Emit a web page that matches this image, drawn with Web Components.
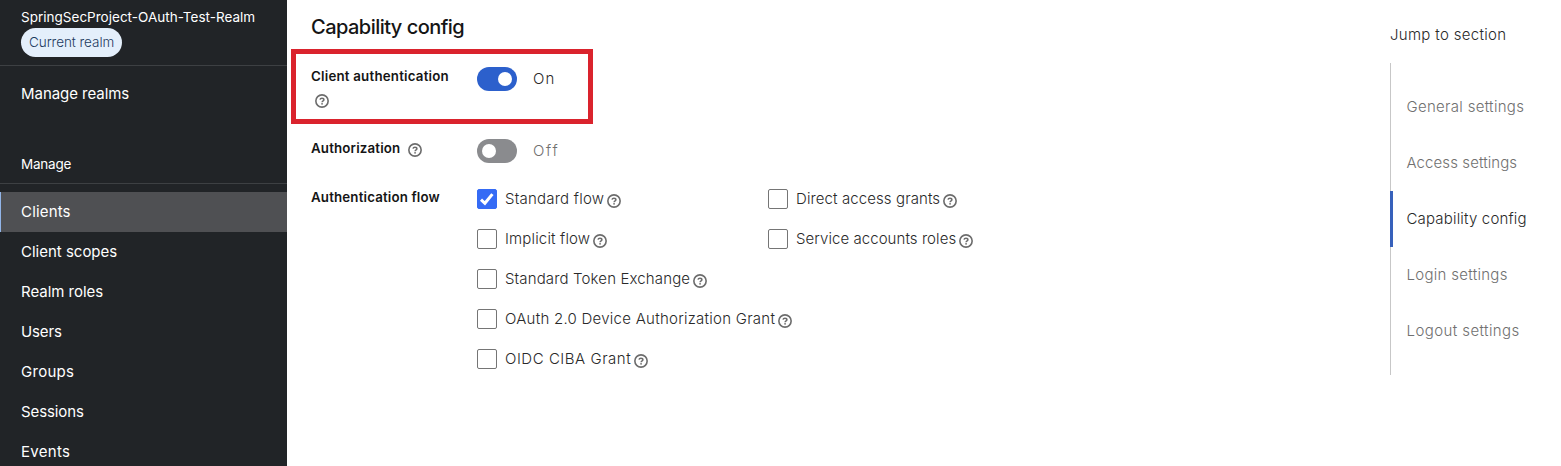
<!DOCTYPE html>
<html lang="en">
<head>
<meta charset="utf-8">
<title>Capability config</title>
<style>
body{margin:0;font-family:Inter,"Open Sans",sans-serif;font-size:15px;line-height:24px;color:#292929;background:#fff}
</style>
</head>
<body>
<app-shell></app-shell>
<script>
const define=(name,html,init)=>customElements.define(name,class extends HTMLElement{
  constructor(){super();this.attachShadow({mode:'open'}).innerHTML=html}
  connectedCallback(){if(init)init.call(this,this.shadowRoot)}
});

// Text whose tracking is set so that its line has the given width.
define('fit-text',`<style>:host{display:inline-block;white-space:nowrap;flex:none}span{display:inline-block;margin-left:1px}:host([flush]) span{margin-left:0}</style><span><slot></slot></span>`,function(r){
  const target=+this.getAttribute('w'),s=r.querySelector('span'),n=this.textContent.length;
  const line=target-(this.hasAttribute('flush')?.6:1.8);
  s.style.letterSpacing=((line-s.getBoundingClientRect().width)/n)+'px';
  this.style.width=target+'px';
});

define('help-icon',`<style>:host{display:block;width:14px;height:14px;flex:none;color:#6c6c6c}svg{display:block}</style>
<svg width="14" height="14" viewBox="0 0 14 14" fill="none" stroke="currentColor"><circle cx="7" cy="7" r="6.150" stroke-width="1.6"/><path d="M5 5.600C5.200 4.600 5.900 4.200 6.900 4.200c1.200 0 2 .6 2 1.500C8.900 6.900 7.100 6.700 7.100 8.200" stroke-width="1.5"/><circle cx="7.050" cy="9.800" r=".9" fill="currentColor" stroke="none"/></svg>`);

define('nav-item',`<style>:host{display:flex;align-items:center;height:40px;padding-left:20px;box-sizing:border-box;color:#fff}
:host([current]){background:#4f5053;border-left:1px solid #92b5e8;padding-left:19px}</style><slot></slot>`);

define('side-bar',`<style>:host{display:block;width:287px;height:466px;flex:none;overflow:hidden;background:#212427;color:#fff}
.realm{height:66px;box-sizing:border-box;border-bottom:1px solid #3d4043;padding:7px 0 0 20px;font-size:13.500px;line-height:21px}
.realm fit-text{display:block}
.badge{display:flex;align-items:center;width:101px;height:29px;border-radius:15px;box-sizing:border-box;padding-left:7px;margin-left:1px;background:#e4effb;color:#1d3a5f;font-weight:350}
.top{padding:8px 0 36px}
.heading{height:34px;box-sizing:border-box;border-bottom:1px solid #3d4043;padding:1px 0 0 20px;font-size:13.500px;line-height:27px}
nav{padding-top:8px}</style>
<div class="realm"><fit-text w="236">SpringSecProject-OAuth-Test-Realm</fit-text><div class="badge"><fit-text w="87">Current realm</fit-text></div></div>
<div class="top"><nav-item><fit-text w="110">Manage realms</fit-text></nav-item></div>
<div class="heading"><fit-text w="52">Manage</fit-text></div>
<nav><nav-item current><fit-text w="51.500">Clients</fit-text></nav-item><nav-item><fit-text w="98">Client scopes</fit-text></nav-item><nav-item><fit-text w="84">Realm roles</fit-text></nav-item><nav-item><fit-text w="42.500">Users</fit-text></nav-item><nav-item><fit-text w="55">Groups</fit-text></nav-item><nav-item><fit-text w="64.500">Sessions</fit-text></nav-item><nav-item><fit-text w="51">Events</fit-text></nav-item></nav>`);

define('toggle-switch',`<style>:host{display:flex;align-items:center;color:#707070}
i{display:block;width:40px;height:24px;border-radius:12px;background:#8a8b8e;padding:5px;box-sizing:border-box;margin-right:15px}
i::after{content:"";display:block;width:14px;height:14px;border-radius:50%;background:#fff}
:host([on]){color:#292929}:host([on]) i{background:#2c60cc}:host([on]) i::after{margin-left:16px}</style><i></i><slot></slot>`);

define('check-option',`<style>:host{display:flex;align-items:center;height:20px;font-weight:var(--body-weight)}
.box{width:20px;height:20px;box-sizing:border-box;border:1px solid #757575;border-radius:2px;margin-right:7px;flex:none}
svg{display:none}:host([checked]) .box{background:#356bf5;border-color:#356bf5}:host([checked]) svg{display:block;margin:-1px}
help-icon{margin:4px 0 0 2px}</style>
<span class="box"><svg width="20" height="20" viewBox="0 0 20 20"><path d="M4 10.600 7.900 14.300 15.400 5.100" fill="none" stroke="#fff" stroke-width="3"/></svg></span><slot></slot><help-icon></help-icon>`);

define('form-label',`<style>:host{display:flex;flex-wrap:wrap;align-content:flex-start;width:166px;box-sizing:border-box;flex:none;font-size:13.300px;font-weight:600;line-height:21px;color:#151515}</style><slot></slot>`);

define('capability-form',`<style>:host{display:block;flex:1;padding-left:24px;font-weight:var(--body-weight)}
h2{margin:14px 0 9px -1px;font-size:20px;line-height:26px;font-weight:450;color:#151515;height:26px}
.box{width:302px;height:75px;margin-left:-20px;box-sizing:border-box;border:5px solid #da232d;padding:12px 0 0 15px;display:flex;align-items:flex-start}
.box toggle-switch{margin-top:1px}
.box help-icon{margin:7px 80px 0 4px}
.auth{display:flex;margin-top:15px;height:24px}.auth form-label{margin-top:-1px}.auth help-icon{margin:5px 0 0 7px}
.flow{display:flex;margin-top:26px}.flow form-label{margin-top:-2px}
.grid{display:grid;grid-template-columns:291px 300px;row-gap:20px}.wide{grid-column:1/3}</style>
<h2><fit-text w="155">Capability config</fit-text></h2>
<section class="box"><form-label><fit-text flush w="138.500">Client authentication</fit-text><help-icon></help-icon></form-label><toggle-switch on><fit-text w="24.500">On</fit-text></toggle-switch></section>
<section class="auth"><form-label><fit-text flush w="90">Authorization</fit-text><help-icon></help-icon></form-label><toggle-switch><fit-text w="28">Off</fit-text></toggle-switch></section>
<section class="flow"><form-label><fit-text flush w="129.500">Authentication flow</fit-text></form-label><div class="grid">
<check-option checked><fit-text w="101">Standard flow</fit-text></check-option><check-option><fit-text w="146">Direct access grants</fit-text></check-option>
<check-option><fit-text w="87">Implicit flow</fit-text></check-option><check-option><fit-text w="162">Service accounts roles</fit-text></check-option>
<check-option class="wide"><fit-text w="187">Standard Token Exchange</fit-text></check-option>
<check-option class="wide"><fit-text w="272">OAuth 2.0 Device Authorization Grant</fit-text></check-option>
<check-option class="wide"><fit-text w="128">OIDC CIBA Grant</fit-text></check-option></div></section>`);

define('jump-item',`<style>:host{display:flex;align-items:center;height:56px;padding-left:14.500px;border-left:1px solid #c7c7c7;box-sizing:border-box;color:#707070}
:host([current]){border-left:3px solid #3761bb;padding-left:12.500px;color:#292929}</style><slot></slot>`);

define('jump-links',`<style>:host{display:block;width:171px;flex:none;padding-top:23px;font-weight:var(--body-weight)}
fit-text{vertical-align:top}
nav{margin-top:16px}.end{height:16px;border-left:1px solid #c7c7c7}</style>
<fit-text flush w="117">Jump to section</fit-text>
<nav><div class="end"></div><jump-item><fit-text w="119.500">General settings</fit-text></jump-item><jump-item><fit-text w="112.500">Access settings</fit-text></jump-item><jump-item current><fit-text w="122">Capability config</fit-text></jump-item><jump-item><fit-text w="103">Login settings</fit-text></jump-item><jump-item><fit-text w="115">Logout settings</fit-text></jump-item><div class="end"></div></nav>`);

define('app-shell',`<style>:host{display:flex;width:1561px;height:466px;overflow:hidden;--body-weight:320}</style><side-bar></side-bar><capability-form></capability-form><jump-links></jump-links>`);
</script>
</body>
</html>
